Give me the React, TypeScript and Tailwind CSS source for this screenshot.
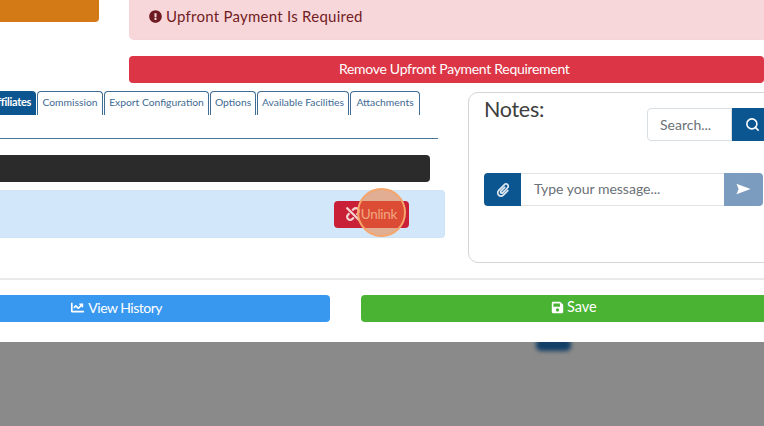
import { FaExclamationCircle, FaChartLine, FaSave, FaPaperclip, FaUnlink } from "react-icons/fa";
import { Search } from "lucide-react";

const tabs = [
  { label: "Commission", w: "w-[66px]" },
  { label: "Export Configuration", w: "w-[105px]" },
  { label: "Options", w: "w-[46px]" },
  { label: "Available Facilities", w: "w-[92px]" },
  { label: "Attachments", w: "w-[70px]" },
];

export default function App() {
  return (
    <div className="relative h-[426px] w-[764px] overflow-hidden bg-[#8a8a8a] font-['Lato','Noto_Sans',sans-serif]">
      <div className="absolute left-[536px] top-[338px] h-[13px] w-[35px] rounded-[5px] bg-[#123f66] blur-[2px]" />
      <div className="relative flex h-[342px] flex-col bg-white">
        <div className="flex h-[83px] shrink-0">
          <div className="h-[22px] w-[99px] shrink-0 rounded-br-[4px] bg-[#d37a17]" />
          <div className="ml-[30px] flex w-[660px] shrink-0 flex-col">
            <div className="flex h-[40px] items-start rounded-b-[5px] border border-t-0 border-[#f5d5d9] bg-[#f8d7da] pl-[19px] pt-[7px] text-[15px] leading-[18px] tracking-[0.25px] text-[#721c24]">
              <span className="flex items-center gap-[4px]">
                <FaExclamationCircle className="text-[13px] text-[#6e1a22]" />
                <span>Upfront Payment Is Required</span>
              </span>
            </div>
            <div className="mt-[16px] flex h-[27px] w-[635px] items-center justify-start rounded-[4px] bg-[#dc3545] pb-[3px] pl-[210px] text-[14px] tracking-[-0.3px] text-white">
              Remove Upfront Payment Requirement
            </div>
          </div>
        </div>

        <div className="flex h-[179px] shrink-0">
          <div className="w-[445px] shrink-0">
            <div className="mt-[8px] flex h-[24px] items-stretch gap-[1px]">
              <div className="flex w-[36px] items-center justify-end overflow-hidden rounded-tr-[4px] bg-[#0b5690] pb-[2px] pr-[5px] text-[11px] font-bold tracking-[-0.3px] text-white">
                Affiliates
              </div>
              {tabs.map((t) => (
                <div
                  key={t.label}
                  className={`flex ${t.w} items-center justify-center rounded-t-[4px] border border-b-0 border-[#3f6d94] bg-white pb-[2px] text-[10.3px] whitespace-nowrap text-[#3f6a94]`}
                >
                  {t.label}
                </div>
              ))}
            </div>
            <div className="mt-[23px] h-px w-[438px] bg-[#4b7796]" />
            <div className="mt-[16px] h-[27px] w-[430px] rounded-r-[4px] bg-[#2b2b2b]" />
            <div className="mt-[8px] flex h-[48px] w-[445px] items-center justify-end rounded-r-[4px] border border-l-0 border-[#cfe3f7] bg-[#d3e7fb] pr-[35px]">
              <div className="flex h-[27px] w-[75px] items-center justify-end rounded-[4px] bg-[#c92038] pr-[12px] text-[13.5px] tracking-[-0.3px] text-[#f3d6d2]">
                <FaUnlink className="text-[14px]" />
                <span className="ml-[1px]">Unlink</span>
              </div>
            </div>
          </div>

          <div className="ml-[23px] mt-[9px] h-[171px] w-[340px] shrink-0 rounded-[10px] border border-[#d5d5d5] bg-white pl-[15px]">
            <div className="flex h-[48px] items-start">
              <div className="w-[60px] text-[21.5px] leading-[32px] tracking-[-0.3px] text-[#3d3d3d]">Notes:</div>
              <div className="ml-[103px] mt-[15px] flex h-[33px]">
                <div className="flex w-[85px] items-center rounded-l-[4px] border border-[#d9dee3] bg-white pl-[12px] text-[14px] text-[#6b7177]">
                  Search...
                </div>
                <div className="flex w-[40px] items-center justify-center bg-[#0b5690] text-white">
                  <Search size={15} strokeWidth={2.5} />
                </div>
              </div>
            </div>
            <div className="mt-[32px] flex h-[33px] w-[279px] items-stretch">
              <div className="flex w-[37px] items-center justify-center rounded-l-[4px] bg-[#0b5690] text-[14px] text-[#dbe7f1]">
                <FaPaperclip />
              </div>
              <div className="flex w-[203px] items-center border-y border-[#e3e3e3] bg-white pb-[2px] pl-[13px] text-[14px] text-[#6b7177]">
                Type your message...
              </div>
              <div className="flex w-[39px] items-center justify-center rounded-r-[4px] bg-[#7c9cbf] pb-[2px] text-white">
                <svg viewBox="0 0 16 12" className="h-[12px] w-[15px]" fill="currentColor">
                  <path d="M0.5 0.5 L15.5 6 L0.5 11.5 L2.8 6 Z" />
                </svg>
              </div>
            </div>
          </div>
        </div>

        <div className="mt-[16px] h-[2px] shrink-0 bg-[#e9e9e9]" />
        <div className="mt-[15px] flex h-[27px] shrink-0">
          <div className="flex w-[330px] shrink-0 items-center justify-end rounded-r-[4px] bg-[#3898f0] pb-[3px] pr-[168px] text-[14px] tracking-[-0.5px] text-white">
            <FaChartLine className="mr-[4px] text-[13px]" />
            <span>View History</span>
          </div>
          <div className="ml-[31px] flex w-[420px] shrink-0 items-center rounded-l-[4px] bg-[#4bb333] pb-[3px] pl-[190px] text-[14.5px] text-white">
            <FaSave className="mr-[3px] text-[13px]" />
            <span>Save</span>
          </div>
        </div>
      </div>

      <div className="absolute left-[357px] top-[188px] h-[49px] w-[49px] rounded-full border-2 border-[#f6a56b] bg-[#f0762e]/50" />
    </div>
  );
}
